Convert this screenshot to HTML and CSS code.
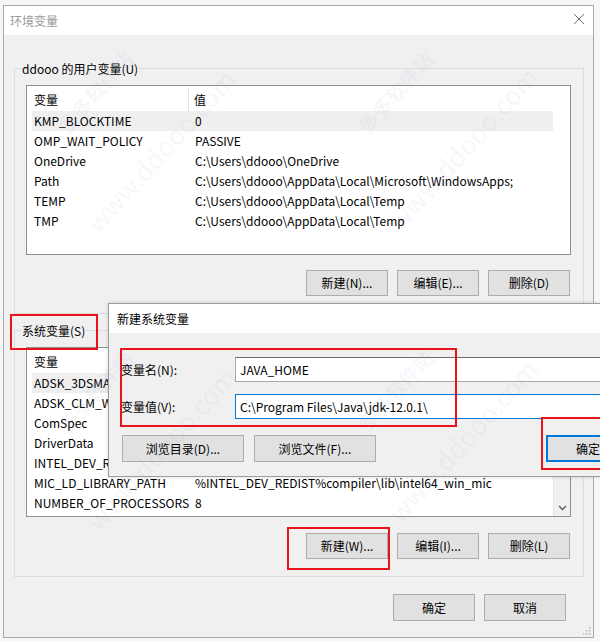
FILE: index.html
```html
<!DOCTYPE html>
<html lang="zh-CN">
<head>
<meta charset="utf-8">
<title>环境变量</title>
<link rel="stylesheet" href="styles.css">
</head>
<body>
<div class="window">
  <div class="titlebar">
    <span class="title">环境变量</span>
    <svg class="close" width="12" height="12" viewBox="0 0 12 12"><path d="M1 1 L11 11 M11 1 L1 11" stroke="#6f6f6f" stroke-width="1" fill="none"/></svg>
  </div>
  <div class="wbody">
    <div class="group">
      <div class="legend">ddooo 的用户变量(U)</div>
      <div class="list">
        <div class="list-main">
          <div class="lhead"><div class="c1">变量</div><div class="c2">值</div></div>
          <div class="row sel"><div class="c1">KMP_BLOCKTIME</div><div class="c2">0</div></div>
          <div class="row"><div class="c1">OMP_WAIT_POLICY</div><div class="c2">PASSIVE</div></div>
          <div class="row"><div class="c1">OneDrive</div><div class="c2">C:\Users\ddooo\OneDrive</div></div>
          <div class="row"><div class="c1">Path</div><div class="c2">C:\Users\ddooo\AppData\Local\Microsoft\WindowsApps;</div></div>
          <div class="row"><div class="c1">TEMP</div><div class="c2">C:\Users\ddooo\AppData\Local\Temp</div></div>
          <div class="row"><div class="c1">TMP</div><div class="c2">C:\Users\ddooo\AppData\Local\Temp</div></div>
        </div>
        <div class="sb"></div>
      </div>
      <div class="btns">
        <button class="btn">新建(N)...</button>
        <button class="btn">编辑(E)...</button>
        <button class="btn">删除(D)</button>
      </div>
    </div>

    <div class="group sys">
      <div class="legend">系统变量(S)</div>
      <div class="list">
        <div class="list-main">
          <div class="lhead"><div class="c1">变量</div><div class="c2">值</div></div>
          <div class="row sel"><div class="c1">ADSK_3DSMAX_x64</div><div class="c2">C:\Program Files\Autodesk\3ds Max\</div></div>
          <div class="row"><div class="c1">ADSK_CLM_WPAD</div><div class="c2">FALSE</div></div>
          <div class="row"><div class="c1">ComSpec</div><div class="c2">C:\WINDOWS\system32\cmd.exe</div></div>
          <div class="row"><div class="c1">DriverData</div><div class="c2">C:\Windows\System32\Drivers\DriverData</div></div>
          <div class="row"><div class="c1">INTEL_DEV_REDIST</div><div class="c2">C:\Program Files (x86)\Common Files\Intel\</div></div>
          <div class="row"><div class="c1">MIC_LD_LIBRARY_PATH</div><div class="c2">%INTEL_DEV_REDIST%compiler\lib\intel64_win_mic</div></div>
          <div class="row"><div class="c1">NUMBER_OF_PROCESSORS</div><div class="c2">8</div></div>
        </div>
        <div class="sb sb-on">
          <div class="sb-btn"><svg width="9" height="6" viewBox="0 0 9 6"><path d="M1 1 L4.5 4.5 L8 1" stroke="#5a5a5a" stroke-width="1.4" fill="none"/></svg></div>
        </div>
      </div>
      <div class="btns">
        <button class="btn">新建(W)...</button>
        <button class="btn">编辑(I)...</button>
        <button class="btn">删除(L)</button>
      </div>
    </div>

    <div class="footer">
      <button class="btn tall">确定</button>
      <button class="btn tall">取消</button>
    </div>
  </div>
  <svg class="grip" width="8" height="8" viewBox="0 0 8 8">
    <rect x="6" y="0" width="1.5" height="1.5" fill="#b5b5b5"/>
    <rect x="3" y="3" width="1.5" height="1.5" fill="#b5b5b5"/><rect x="6" y="3" width="1.5" height="1.5" fill="#b5b5b5"/>
    <rect x="0" y="6" width="1.5" height="1.5" fill="#b5b5b5"/><rect x="3" y="6" width="1.5" height="1.5" fill="#b5b5b5"/><rect x="6" y="6" width="1.5" height="1.5" fill="#b5b5b5"/>
  </svg>
</div>

<div class="dialog">
  <div class="dtitle">新建系统变量</div>
  <div class="dbody">
    <div class="field">
      <label class="flabel">变量名(N):</label>
      <div class="input">JAVA_HOME</div>
    </div>
    <div class="field">
      <label class="flabel">变量值(V):</label>
      <div class="input focus">C:\Program Files\Java\jdk-12.0.1\</div>
    </div>
    <div class="dbtns">
      <button class="btn wide">浏览目录(D)...</button>
      <button class="btn wide">浏览文件(F)...</button>
      <button class="btn default">确定</button>
    </div>
  </div>
</div>

<div class="anno a1"></div>
<div class="anno a2"></div>
<div class="anno a3"></div>
<div class="anno a4"></div>

<span class="wm wm-cn w1">多多软件站</span>
<span class="wm wm-en w2">www.ddooo.com</span>
<span class="wm wm-cn w3">多多软件站</span>
<span class="wm wm-en w4">www.ddooo.com</span>
<span class="wm wm-cn w5">多多软件站</span>
<span class="wm wm-en w6">www.ddooo.com</span>
<span class="wm wm-cn w7">多多软件站</span>
<span class="wm wm-en w8">www.ddooo.com</span>
</body>
</html>
```

FILE: styles.css
```css
* { box-sizing: border-box; }

html, body {
  margin: 0;
  padding: 0;
}

body {
  position: relative;
  width: 600px;
  height: 641px;
  overflow: hidden;
  background: #f7f7f7;
  font-family: "Noto Sans CJK SC", "Noto Sans", sans-serif;
  font-size: 12px;
  color: #000;
}

.window {
  position: relative;
  margin: 5px 0 0 3px;
  width: 591px;
  height: 633px;
  border: 1px solid #a8a8a8;
  background: #f0f0f0;
  display: flex;
  flex-direction: column;
}

.titlebar {
  height: 29px;
  background: #fff;
  display: flex;
  align-items: center;
  justify-content: space-between;
  padding: 0 8px 0 6px;
  flex-shrink: 0;
}

.title {
  color: #999;
  font-size: 12px;
  line-height: 17px;
  margin-top: -1px;
}

.close { margin-top: -3px; }

.wbody {
  flex: 1;
  background: #f0f0f0;
  padding-top: 33px;
  display: flex;
  flex-direction: column;
}

.group {
  margin: 0 9px 0 10px;
  border: 1px solid #dcdcdc;
  padding-bottom: 17px;
}

.group.sys { margin-top: 16px; }

.legend {
  margin: -9px 0 0 6px;
  padding: 0 1px;
  width: fit-content;
  background: #f0f0f0;
  line-height: 17px;
}

.list {
  margin: 8px 12px 0 11px;
  height: 170px;
  border: 1px solid #8f8f8f;
  background: #fff;
  display: flex;
  overflow: hidden;
}

.list-main {
  flex: 1;
  padding-left: 5px;
  overflow: hidden;
  white-space: nowrap;
}

.lhead {
  display: flex;
  height: 25px;
  align-items: stretch;
}

.lhead .c1 {
  width: 157px;
  border-right: 1px solid #e5e5e5;
  margin-top: 2px;
  padding-left: 2px;
  display: flex;
  align-items: center;
}

.lhead .c2 {
  padding-left: 5px;
  display: flex;
  align-items: center;
  margin-top: 2px;
}

.row {
  display: flex;
  height: 20px;
  line-height: 20px;
}

.row.sel { background: #efefef; }

.row .c1 {
  width: 163px;
  padding-left: 2px;
  overflow: hidden;
  text-overflow: ellipsis;
  flex-shrink: 0;
}

.row .c2 {
  overflow: hidden;
}

.sb {
  width: 17px;
  flex-shrink: 0;
  display: flex;
  flex-direction: column;
  justify-content: flex-end;
}

.sb-on {
  background: #f0f0f0;
  border-left: 1px solid #e3e3e3;
}

.sb-btn {
  height: 17px;
  display: flex;
  align-items: center;
  justify-content: center;
}

.btns {
  display: flex;
  justify-content: flex-end;
  gap: 9px;
  margin: 15px 13px 0 0;
}

.sys .btns { margin-top: 16px; }

.btn {
  font-family: inherit;
  font-size: 12px;
  color: #000;
  width: 82px;
  height: 26px;
  padding: 0;
  background: #e1e1e1;
  border: 1px solid #adadad;
  border-radius: 0;
  line-height: 22px;
}

.btn.tall { height: 27px; }

.footer {
  display: flex;
  justify-content: flex-end;
  gap: 9px;
  margin: 17px 27px 0 0;
}

.grip {
  position: absolute;
  right: 2px;
  bottom: 2px;
}

.dialog {
  position: absolute;
  left: 108px;
  top: 303px;
  width: 520px;
  height: 174px;
  border: 1px solid #9c9c9c;
  background: #f0f0f0;
  box-shadow: 0 0 4px rgba(0,0,0,0.15);
  display: flex;
  flex-direction: column;
}

.dtitle {
  height: 29px;
  background: #fff;
  padding-left: 8px;
  line-height: 29px;
  font-size: 12px;
}

.dbody {
  padding: 24px 0 0 12px;
  display: flex;
  flex-direction: column;
}

.field {
  display: flex;
  align-items: center;
  height: 25px;
}

.field + .field { margin-top: 12px; }

.flabel {
  width: 114px;
  flex-shrink: 0;
}

.input {
  width: 400px;
  height: 25px;
  background: #fff;
  border: 1px solid #a9a9a9;
  border-top-color: #6e6e6e;
  padding-left: 4px;
  line-height: 23px;
  white-space: nowrap;
}

.input.focus {
  border: 1px solid #0078d7;
}

.dbtns {
  display: flex;
  margin-top: 16px;
  padding-left: 1px;
  gap: 10px;
}

.btn.wide {
  width: 124px;
  height: 27px;
}

.btn.default {
  height: 27px;
  margin-left: 160px;
  border: 1px solid #0078d7;
  box-shadow: inset 0 0 0 1px #0078d7;
  width: 82px;
  text-align: left;
  padding-left: 29px;
}

.anno {
  position: absolute;
  border: 2px solid #e8141c;
}

.a1 { left: 10px; top: 314px; width: 88px; height: 36px; }
.a2 { left: 120px; top: 348px; width: 337px; height: 79px; }
.a3 { left: 541px; top: 417px; width: 70px; height: 53px; }
.a4 { left: 287px; top: 527px; width: 103px; height: 43px; }

.wm {
  position: absolute;
  white-space: nowrap;
  color: rgba(120, 130, 190, 0.08);
  transform: translate(-50%, -50%) rotate(-48deg);
  pointer-events: none;
  font-family: "Noto Sans CJK SC", "Noto Sans", sans-serif;
  font-weight: 700;
}

.wm-cn { font-size: 20px; }
.wm-en { font-size: 26px; font-weight: 400; }

.w1 { left: 95px; top: 92px; }
.w2 { left: 160px; top: 150px; }
.w3 { left: 395px; top: 92px; }
.w4 { left: 462px; top: 148px; }
.w5 { left: 95px; top: 392px; }
.w6 { left: 160px; top: 448px; }
.w7 { left: 395px; top: 390px; }
.w8 { left: 462px; top: 440px; }
```
